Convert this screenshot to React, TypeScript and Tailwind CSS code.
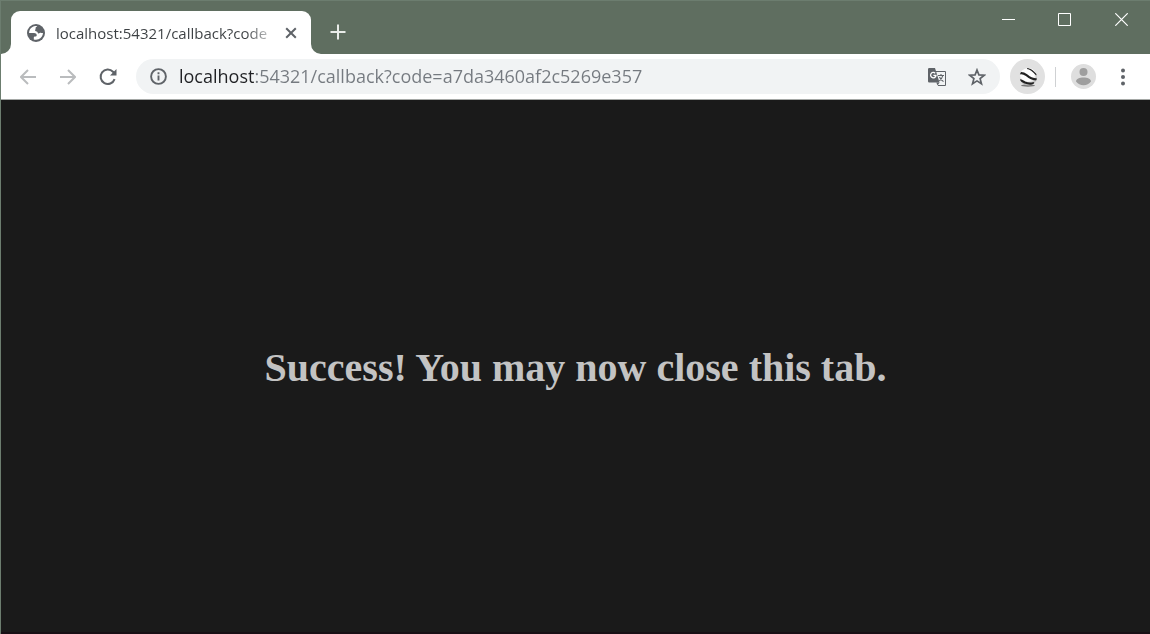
import type { ReactNode } from "react";

type IconButtonProps = {
  label: string;
  className?: string;
  children: ReactNode;
};

function IconButton({ label, className = "", children }: IconButtonProps) {
  return (
    <button
      type="button"
      aria-label={label}
      className={`flex shrink-0 items-center justify-center ${className}`}
    >
      {children}
    </button>
  );
}

function TabCurve({ className }: { className: string }) {
  return (
    <svg viewBox="0 0 10 10" className={`size-2.5 shrink-0 fill-white ${className}`} aria-hidden="true">
      <path d="M10 0v10H0A10 10 0 0 0 10 0Z" />
    </svg>
  );
}

function GlobeIcon() {
  return (
    <svg viewBox="0 0 18 18" className="size-[18px] shrink-0" aria-hidden="true">
      <circle cx="9" cy="9" r="9" fill="#5f6368" />
      <path
        d="M10.3 2.2C9.2 2.9 8.3 3.4 8.6 4.5c.2.8-.6 1.200-.5 2 .1.900 1.500.7 2.100 1.300.6.6.4 1.500 1.300 1.600 1 .1 1.500-.7 2.700-.5.9.1 1.300.2 1.800.1-.1 2.700-1.900 5.300-4.500 6.300-1.500.6-3.300.6-4.700.1v-2c0-.6.4-.9 1.100-.9 1.300 0 1.900-.5 1.800-1.600-.1-1.200-1.200-1.900-2.600-1.900H2.100C2 5.500 4.700 2.300 8.500 2c.6-.1 1.300 0 1.800.2Z"
        fill="#fff"
      />
    </svg>
  );
}

function TabStrip() {
  return (
    <header className="flex items-end bg-[#5f6e60]">
      <div className="flex min-w-0 items-end pt-2.5">
        <TabCurve className="" />
        <div className="flex h-[43px] w-[300px] items-center rounded-t-[9px] bg-white pr-3 pl-4">
          <GlobeIcon />
          <span className="ml-[11px] min-w-0 flex-1 overflow-hidden bg-linear-to-r from-[#3c4043] from-85% to-transparent bg-clip-text pt-0.5 font-['Open_Sans',sans-serif] text-[15px] whitespace-nowrap text-transparent">
            localhost:54321/callback?code
          </span>
          <IconButton label="Close tab" className="ml-1 size-4">
            <svg viewBox="0 0 12 12" className="size-3" fill="none" stroke="#5f6368" strokeWidth="2">
              <path d="m1.200 1.200 9.600 9.600m0-9.600-9.600 9.600" />
            </svg>
          </IconButton>
        </div>
        <TabCurve className="-scale-x-100" />
      </div>
      <IconButton label="New tab" className="mb-1.5 ml-px size-8">
        <svg viewBox="0 0 16 16" className="size-4" fill="none" stroke="#e9ece9" strokeWidth="2">
          <path d="M8 .5v15M.5 8h15" />
        </svg>
      </IconButton>
      <div className="ml-auto flex self-start">
        <IconButton label="Minimize" className="h-[37px] w-14">
          <svg viewBox="0 0 13 13" className="size-[13px]" fill="none" stroke="#fff">
            <path d="M0 6.500h13" />
          </svg>
        </IconButton>
        <IconButton label="Maximize" className="h-[37px] w-14">
          <svg viewBox="0 0 13 13" className="size-[13px]" fill="none" stroke="#fff">
            <path d="M.5.5h12v12H.5z" />
          </svg>
        </IconButton>
        <IconButton label="Close window" className="h-[37px] w-[58px]">
          <svg viewBox="0 0 13 13" className="size-[13px]" fill="none" stroke="#fff" strokeWidth="1.200">
            <path d="m.3.3 12.400 12.400m0-12.400L.3 12.700" />
          </svg>
        </IconButton>
      </div>
    </header>
  );
}

function AddressBar() {
  return (
    <div className="ml-2 flex h-[35px] min-w-0 flex-1 items-center rounded-full bg-[#f1f3f4] pr-3.5 pl-3.5">
      <IconButton label="Site information" className="size-[17px]">
        <svg viewBox="0 0 17 17" className="size-[17px]" fill="none" stroke="#5f6368" strokeWidth="1.900">
          <circle cx="8.500" cy="8.500" r="7.400" />
          <path d="M8.500 7.600v5M8.500 4.300v1.900" />
        </svg>
      </IconButton>
      <input
        type="text"
        aria-label="Address"
        defaultValue="localhost:54321/callback?code=a7da3460af2c5269e357"
        className="ml-3 h-full min-w-0 flex-1 bg-linear-to-r from-[#202124] from-[75px] to-[#757a80] to-[75px] bg-clip-text pb-0.5 font-['Open_Sans',sans-serif] text-[18px] text-transparent outline-none"
      />
      <IconButton label="Translate this page" className="size-[18px]">
        <svg viewBox="0 0 18 18" className="size-[18px]">
          <path d="M7 3.500h10.500v14H10" fill="#f1f3f4" stroke="#5f6368" strokeWidth="1" />
          <path d="M1.200 0H7l4.500 14.500H1.200A1.200 1.200 0 0 1 0 13.300V1.200A1.200 1.200 0 0 1 1.200 0Z" fill="#5f6368" />
          <path d="M8.300 14.500h3.200L9.600 17.500Z" fill="#5f6368" />
          <path d="M7.200 5.200A2.700 2.700 0 1 0 8 7.400H5.400" fill="none" stroke="#fff" strokeWidth="1.300" />
          <path
            d="M10 7.500h6M13 6v1.500M14.800 7.500c-.5 2.300-1.800 4.200-3.600 5.400M11.500 9c.8 1.900 2.200 3.400 4 4.600"
            fill="none"
            stroke="#5f6368"
            strokeWidth="1.100"
          />
        </svg>
      </IconButton>
      <IconButton label="Bookmark this page" className="ml-[22px] size-[18px]">
        <svg viewBox="0 0 18 18" className="size-[18px]" fill="none" stroke="#5f6368" strokeWidth="1.700">
          <path d="m9 2 1.900 4.900 5.400.3-4.200 3.400 1.400 5.200L9 12.900l-4.500 2.900 1.400-5.200-4.200-3.400 5.400-.3Z" />
        </svg>
      </IconButton>
    </div>
  );
}

function EarthIcon() {
  return (
    <svg viewBox="0 0 20 20" className="size-5" aria-hidden="true">
      <defs>
        <radialGradient id="sphere" cx="0.450" cy="0.350" r="0.700">
          <stop offset="0.550" stopColor="#fff" />
          <stop offset="1" stopColor="#999" />
        </radialGradient>
        <clipPath id="sphere-edge">
          <circle cx="10.300" cy="9.800" r="8.800" />
        </clipPath>
      </defs>
      <ellipse cx="10" cy="18.500" rx="7" ry="1.200" fill="#777" />
      <circle cx="10.300" cy="9.800" r="8.800" fill="url(#sphere)" />
      <g clipPath="url(#sphere-edge)" fill="none" stroke="#222">
        <path d="M9 1.500c4 .3 6 2.500 9.500 6.500" strokeWidth="1.200" />
        <path d="M1 6.500c3-1.300 4.800-.4 7.500 1.700 3.500 2.800 5.500 4.200 11 4.300" strokeWidth="2.200" />
        <path d="M1 13.500c2-.3 3.500.8 6 2 2.800 1.200 5.500 1.500 9 .5" strokeWidth="2.200" />
      </g>
    </svg>
  );
}

function Toolbar() {
  return (
    <nav
      aria-label="Browser toolbar"
      className="flex h-[46px] items-center border-b border-[#a5a8a6] bg-white pr-3 pl-[7px]"
    >
      <IconButton label="Back" className="size-10">
        <svg viewBox="0 0 16 16" className="size-4" fill="none" stroke="#babcbe" strokeWidth="2">
          <path d="M16 8H1.500M8 1 1 8l7 7" />
        </svg>
      </IconButton>
      <IconButton label="Forward" className="size-10">
        <svg viewBox="0 0 16 16" className="size-4" fill="none" stroke="#babcbe" strokeWidth="2">
          <path d="M0 8h14.500M8 1l7 7-7 7" />
        </svg>
      </IconButton>
      <IconButton label="Reload" className="size-10">
        <svg viewBox="0 0 18 18" className="size-[18px]" fill="none">
          <path d="M15.600 11.200A7.200 7.200 0 1 1 14 3.800L16 6" stroke="#5f6368" strokeWidth="2" />
          <path d="M17.500 1v6.500H11Z" fill="#5f6368" />
        </svg>
      </IconButton>
      <AddressBar />
      <IconButton label="Earth extension" className="ml-2.5 size-[35px] rounded-full bg-[#e1e1e1]">
        <EarthIcon />
      </IconButton>
      <span className="ml-2.5 h-5 w-px shrink-0 bg-[#cfd1d3]" />
      <IconButton label="Profile" className="ml-[15px] size-[25px] rounded-full bg-[#dedede]">
        <svg viewBox="0 0 25 25" className="size-[25px] fill-[#9e9e9e]">
          <circle cx="12.500" cy="8" r="4" />
          <path d="M5 17.500c0-2.600 3.700-4 7.500-4s7.500 1.400 7.500 4c-1.700 2.300-4.400 3.700-7.500 3.700S6.700 19.800 5 17.500Z" />
        </svg>
      </IconButton>
      <IconButton label="Menu" className="ml-3 size-[30px]">
        <svg viewBox="0 0 4 18" className="h-[18px] w-1 fill-[#5f6368]">
          <circle cx="2" cy="2.500" r="2" />
          <circle cx="2" cy="9" r="2" />
          <circle cx="2" cy="15.500" r="2" />
        </svg>
      </IconButton>
    </nav>
  );
}

export default function App() {
  return (
    <div className="flex min-h-screen flex-col border-t border-l border-[#6c7d6f] bg-[#1a1a1a]">
      <TabStrip />
      <Toolbar />
      <main className="flex flex-1 items-center justify-center border-b-2 border-[#180f15] px-4 pt-1">
        <h1 className="text-center font-['Liberation_Serif',serif] text-[40px] leading-[46px] font-bold text-[#c3c3c3]">
          Success! You may now close this tab.
        </h1>
      </main>
    </div>
  );
}
